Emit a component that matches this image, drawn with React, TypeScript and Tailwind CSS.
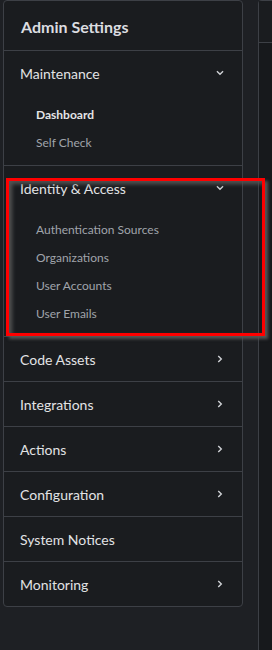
import React from 'react';

type Section = {
  label: string;
  arrow?: 'down' | 'right';
  items?: { label: string; active?: boolean }[];
};

const sections: Section[] = [
  {
    label: 'Maintenance',
    arrow: 'down',
    items: [{ label: 'Dashboard', active: true }, { label: 'Self Check' }],
  },
  {
    label: 'Identity & Access',
    arrow: 'down',
    items: [
      { label: 'Authentication Sources' },
      { label: 'Organizations' },
      { label: 'User Accounts' },
      { label: 'User Emails' },
    ],
  },
  { label: 'Code Assets', arrow: 'right' },
  { label: 'Integrations', arrow: 'right' },
  { label: 'Actions', arrow: 'right' },
  { label: 'Configuration', arrow: 'right' },
  { label: 'System Notices' },
  { label: 'Monitoring', arrow: 'right' },
];

const Chevron = ({ dir }: { dir: 'down' | 'right' }) => (
  <svg viewBox="0 0 16 16" className="w-[14px] h-[14px] text-[#d0d2d6]" fill="none" stroke="currentColor" strokeWidth="1.6">
    {dir === 'down' ? <path d="M4.5 6 8 9.5 11.5 6" /> : <path d="M6 4.5 9.5 8 6 11.5" />}
  </svg>
);

export default function App() {
  return (
    <div
      className="relative w-[272px] h-[650px] overflow-hidden bg-[#1e2024] flex gap-[15px] pl-[3px]"
      style={{ fontFamily: 'Lato, "Noto Sans", sans-serif' }}
    >
      {/* Sidebar */}
      <div className="w-[240px] shrink-0 self-start rounded-[4px] border border-[#3d4046] bg-[#1a1c1f]">
        <div className="h-[50px] flex items-center pl-[17px] pt-[2px] border-b border-[#3d4046] text-[16px] font-bold text-[#dcdde0]">
          Admin Settings
        </div>
        {sections.map((s, i) => (
          <div key={s.label} className={i < sections.length - 1 ? 'border-b border-[#3d4046]' : ''}>
            <div className="h-[44px] flex items-center justify-between pl-[16px] pr-[15px] text-[14px] text-[#e2e3e5]">
              <span>{s.label}</span>
              {s.arrow && <Chevron dir={s.arrow} />}
            </div>
            {s.items && (
              <div className="pt-[6px] pb-[8px]">
                {s.items.map((it) => (
                  <div
                    key={it.label}
                    className={`h-[28px] flex items-center pl-[32px] text-[12px] ${
                      it.active ? 'font-bold text-[#e4e5e7]' : 'text-[#a0a4ab]'
                    }`}
                  >
                    {it.label}
                  </div>
                ))}
              </div>
            )}
          </div>
        ))}
      </div>

      {/* Content column */}
      <div className="flex-1 flex flex-col rounded-tl-[4px] border-l border-t border-[#3d4046] bg-[#17191c]">
        <div className="h-[42px] border-b border-[#3d4046] bg-[#1a1c1f]" />
        <div className="flex-1" />
      </div>

      {/* Highlight overlay */}
      <div className="absolute left-[6px] top-[178px] w-[259px] h-[158px] border-[3px] border-[#ff0000] shadow-[3px_3px_3px_#555,inset_3px_3px_4px_#555] pointer-events-none" />
    </div>
  );
}
